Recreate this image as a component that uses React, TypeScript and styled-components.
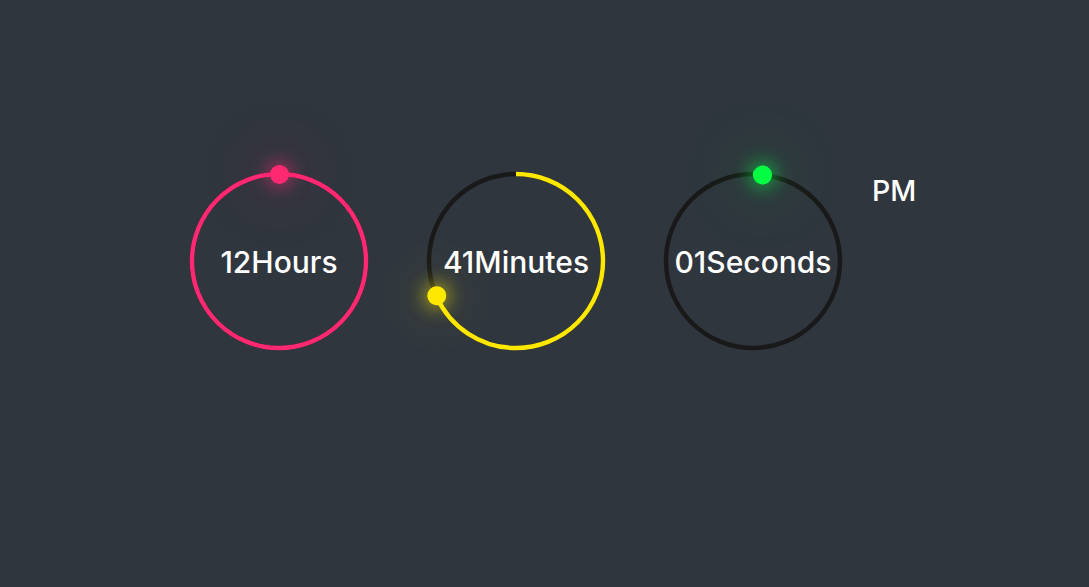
import React from "react";
import styled, { createGlobalStyle } from "styled-components";

const GlobalStyle = createGlobalStyle`
  * { box-sizing: border-box; }
  html, body { margin: 0; padding: 0; }
  body {
    background: #2f363e;
    min-height: 100vh;
    font-family: Inter, "Open Sans", "Liberation Sans", sans-serif;
    overflow: hidden;
  }
`;

const Page = styled.main`
  min-height: 587px;
  background: #2f363e;
  padding: 172px 0 0 190px;
`;

const Clock = styled.div`
  display: flex;
  align-items: flex-start;
  gap: 59px;
`;

const SIZE = 178;
const R = 87;
const CIRC = 2 * Math.PI * R;

const Dial = styled.div`
  position: relative;
  width: ${SIZE}px;
  height: ${SIZE}px;
  display: flex;
  align-items: center;
  justify-content: center;
  flex-shrink: 0;
`;

const Ring = styled.svg`
  position: absolute;
  inset: 0;
  width: ${SIZE}px;
  height: ${SIZE}px;
  transform: rotate(-90deg);
  overflow: visible;
`;

const Track = styled.circle`
  fill: transparent;
  stroke: #191919;
  stroke-width: 4.5;
`;

const Arc = styled.circle<{ $clr: string }>`
  fill: transparent;
  stroke: ${(p) => p.$clr};
  stroke-width: 4.5;
`;

const Rotor = styled.div`
  position: absolute;
  inset: 0;
  display: flex;
  justify-content: center;
  pointer-events: none;
  z-index: 2;
`;

const Dot = styled.span<{ $clr: string }>`
  position: absolute;
  top: -7.5px;
  width: 19px;
  height: 19px;
  border-radius: 50%;
  background: ${(p) => p.$clr};
  box-shadow: 0 0 20px ${(p) => p.$clr}, 0 0 60px ${(p) => p.$clr}b0;
`;

const Label = styled.div`
  position: relative;
  z-index: 1;
  color: #ffffff;
  font-size: 30px;
  font-weight: 500;
  letter-spacing: 0px;
  line-height: 1;
  white-space: nowrap;
  margin-top: 1px;
`;

const AmPm = styled.div`
  color: #ffffff;
  font-size: 28.5px;
  font-weight: 500;
  line-height: 1;
  margin: 5px 0 0 -29px;
`;

type UnitProps = { value: number; max: number; unit: string; clr: string };

function Unit({ value, max, unit, clr }: UnitProps) {
  const frac = value / max;
  const deg = frac * 360;
  return (
    <Dial>
      <Ring viewBox={`0 0 ${SIZE} ${SIZE}`}>
        <Track cx={SIZE / 2} cy={SIZE / 2} r={R} />
        <Arc
          $clr={clr}
          cx={SIZE / 2}
          cy={SIZE / 2}
          r={R}
          strokeDasharray={`${CIRC * frac} ${CIRC}`}
        />
      </Ring>
      <Rotor style={{ transform: `rotate(${deg}deg)` }}>
        <Dot $clr={clr} />
      </Rotor>
      <Label>
        {String(value).padStart(2, "0")}
        {unit}
      </Label>
    </Dial>
  );
}

export default function App() {
  return (
    <>
      <GlobalStyle />
      <Page>
        <Clock>
          <Unit value={12} max={12} unit="Hours" clr="#ff2972" />
          <Unit value={41} max={60} unit="Minutes" clr="#fee800" />
          <Unit value={1} max={60} unit="Seconds" clr="#04fc43" />
          <AmPm>PM</AmPm>
        </Clock>
      </Page>
    </>
  );
}
